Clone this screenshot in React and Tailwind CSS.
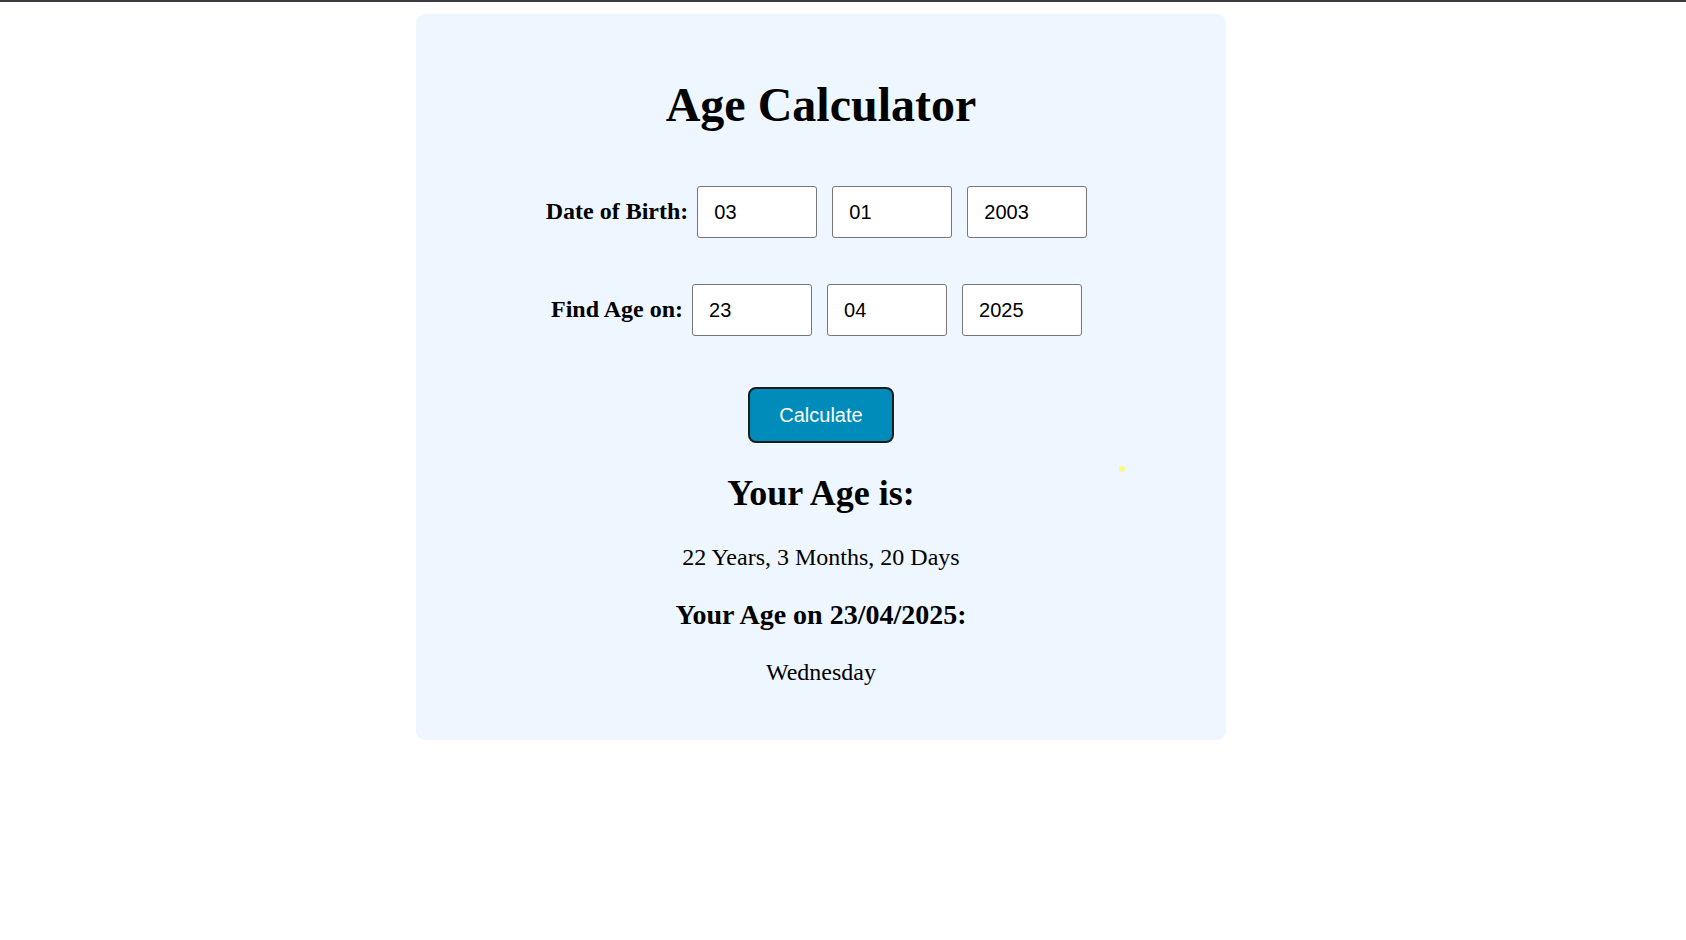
import React from "react";

const serif = { fontFamily: '"Liberation Serif", "Times New Roman", serif' };

function DateInput({ value }) {
  return (
    <input
      type="text"
      defaultValue={value}
      className="w-[120px] h-[52px] box-border border border-[#767676] rounded-[3px] bg-white pl-[16px] pr-2 text-[20px] text-black font-['Liberation_Sans',Arial,sans-serif] outline-none"
    />
  );
}

function Row({ label, values, className }) {
  return (
    <div className={"flex items-center justify-center pr-[9px] " + className}>
      <label className="text-[24px] leading-none font-bold text-black mr-[9px] mb-[2px] font-['Liberation_Serif','Times_New_Roman',serif]">
        {label}
      </label>
      <div className="flex gap-[15px]">
        {values.map((v, i) => (
          <DateInput key={i} value={v} />
        ))}
      </div>
    </div>
  );
}

export default function App() {
  return (
    <div className="min-h-[940px] w-full bg-white relative" style={serif}>
      <div className="h-[2px] w-full bg-[#3c3b44]" />
      <div className="ml-[416px] mt-[12px] w-[810px] h-[726px] rounded-[9px] bg-[#eef6ff] flex flex-col items-center pt-[67px] box-border relative">
        <h1 className="text-[48px] leading-none font-bold text-black font-['Liberation_Serif','Times_New_Roman',serif]">
          Age Calculator
        </h1>
        <Row className="mt-[57px] w-full" label="Date of Birth:" values={["03", "01", "2003"]} />
        <Row className="mt-[46px] w-full" label="Find Age on:" values={["23", "04", "2025"]} />
        <button className="mt-[51px] w-[146px] h-[56px] rounded-[8px] border-2 border-[#1c1c1c] bg-[#008cba] text-white text-[20px] font-['Liberation_Sans',Arial,sans-serif]">
          Calculate
        </button>
        <h2 className="mt-[32px] text-[36px] leading-none font-bold text-black font-['Liberation_Serif','Times_New_Roman',serif]">
          Your Age is:
        </h2>
        <p className="mt-[34px] text-[24px] leading-none text-black font-['Liberation_Serif','Times_New_Roman',serif]">
          22 Years, 3 Months, 20 Days
        </p>
        <h3 className="mt-[32px] text-[28px] leading-none font-bold text-black font-['Liberation_Serif','Times_New_Roman',serif]">
          Your Age on 23/04/2025:
        </h3>
        <p className="mt-[31px] text-[24px] leading-none text-black font-['Liberation_Serif','Times_New_Roman',serif]">
          Wednesday
        </p>
      </div>
      <div className="absolute left-[1119px] top-[466px] w-[6px] h-[6px] rounded-full bg-[#fbfb7a]" />
    </div>
  );
}
